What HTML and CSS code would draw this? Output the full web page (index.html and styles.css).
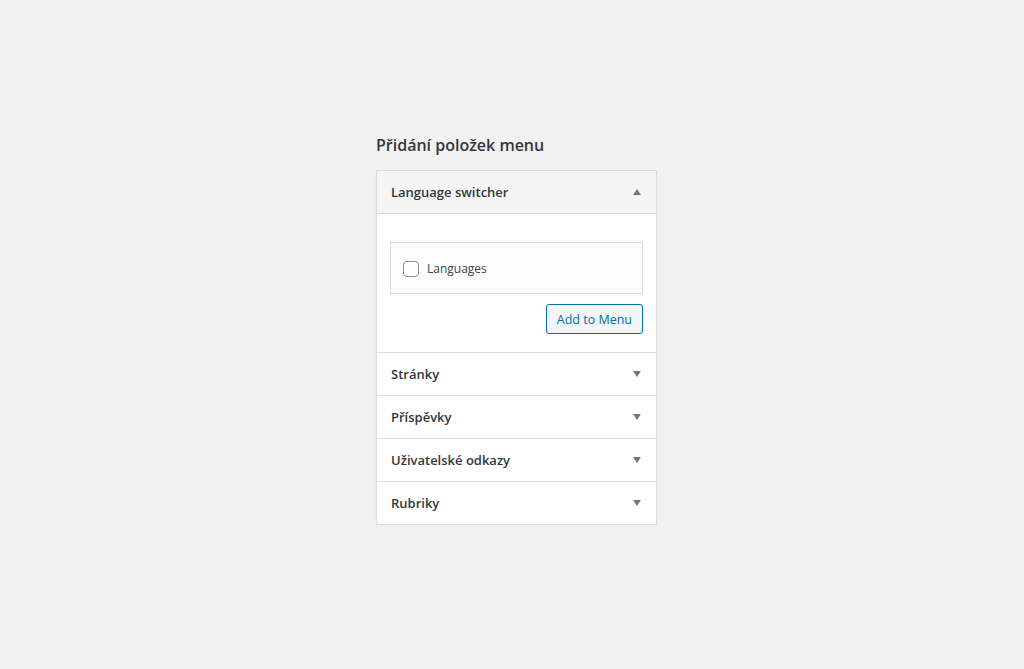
FILE: index.html
```html
<!DOCTYPE html>
<html lang="cs">
<head>
<meta charset="utf-8">
<title>Přidání položek menu</title>
<link rel="stylesheet" href="styles.css">
</head>
<body>
<div class="wrap">
  <h2 class="title">Přidání položek menu</h2>
  <div class="accordion">
    <div class="section open">
      <div class="sec-head">
        <span class="sec-title">Language switcher</span>
        <span class="arrow up"></span>
      </div>
      <div class="sec-body">
        <div class="checklist">
          <label class="item"><span class="cb"></span><span class="item-label">Languages</span></label>
        </div>
        <div class="actions">
          <button class="btn">Add to Menu</button>
        </div>
      </div>
    </div>
    <div class="section">
      <div class="sec-head"><span class="sec-title">Stránky</span><span class="arrow"></span></div>
    </div>
    <div class="section">
      <div class="sec-head"><span class="sec-title">Příspěvky</span><span class="arrow"></span></div>
    </div>
    <div class="section">
      <div class="sec-head"><span class="sec-title">Uživatelské odkazy</span><span class="arrow"></span></div>
    </div>
    <div class="section">
      <div class="sec-head"><span class="sec-title">Rubriky</span><span class="arrow"></span></div>
    </div>
  </div>
</div>
</body>
</html>
```
FILE: styles.css
```css
html, body {
  margin: 0;
  padding: 0;
  background: #f1f1f1;
  font-family: "Open Sans", "Noto Sans", sans-serif;
  color: #32373c;
}
.wrap {
  width: 281px;
  margin-left: calc(50% - 136px);
  padding-top: 134px;
}
.title {
  margin: 0 0 14px 0;
  font-size: 16px;
  font-weight: 600;
  line-height: 22px;
  color: #32373c;
}
.accordion {
  background: #fff;
  border: 1px solid #dcdcde;
  box-shadow: 0 1px 1px rgba(0,0,0,0.1);
}
.section + .section {
  border-top: 1px solid #dcdcde;
}
.sec-head {
  height: 42px;
  display: flex;
  align-items: center;
  justify-content: space-between;
  padding: 0 14px 0 14px;
}
.open .sec-head {
  background: #f5f5f5;
  border-bottom: 1px solid #dcdcde;
}
.sec-title {
  font-size: 13px;
  font-weight: 600;
  color: #32373c;
}
.arrow {
  width: 0;
  height: 0;
  border-left: 4px solid transparent;
  border-right: 4px solid transparent;
  border-top: 6px solid #72777c;
  margin-right: 1px;
}
.arrow.up {
  border-top: none;
  border-bottom: 6px solid #72777c;
}
.sec-body {
  padding: 28px 13px 18px 13px;
}
.checklist {
  box-sizing: border-box;
  border: 1px solid #dcdcde;
  background: #fcfcfc;
  height: 52px;
  display: flex;
  align-items: center;
  padding: 1px 12px 0 12px;
}
.item {
  display: flex;
  align-items: center;
  gap: 8px;
}
.cb {
  width: 14px;
  height: 14px;
  border: 1px solid #8c8f94;
  border-radius: 4px;
  background: #fff;
}
.item-label {
  font-size: 12px;
  color: #444;
}
.actions {
  display: flex;
  justify-content: flex-end;
  margin-top: 10px;
}
.btn {
  font-family: "Open Sans", "Noto Sans", sans-serif;
  font-size: 12.5px;
  height: 30px;
  padding: 0 10px;
  border: 1px solid #0071a1;
  border-radius: 3px;
  background: #f3f5f6;
  color: #0071a1;
}
```
